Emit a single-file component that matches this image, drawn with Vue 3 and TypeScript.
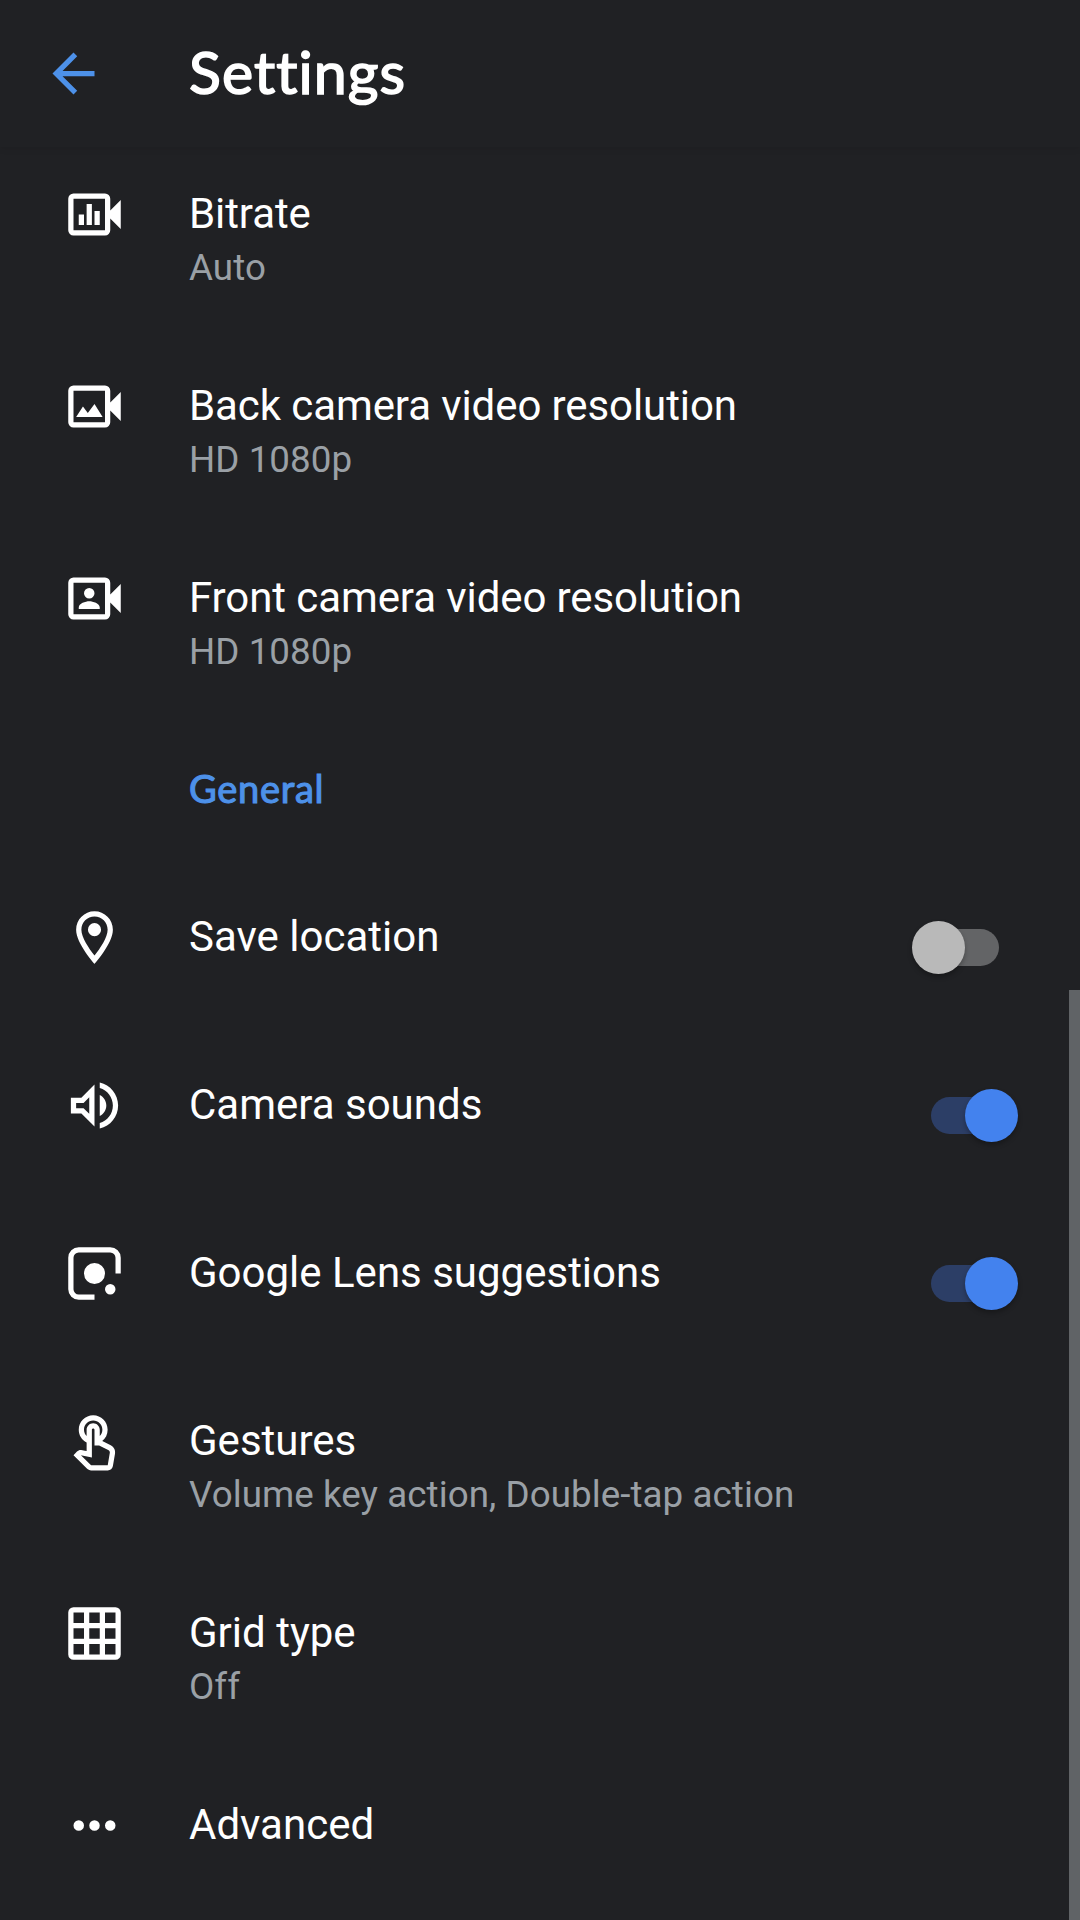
<script setup lang="ts">
import { ref } from 'vue'

interface Item {
  id: string
  title: string
  summary?: string
  toggle?: boolean
  path: string
}

const videoFrame =
  'M4 4h12a2 2 0 0 1 2 2v4.5l4-4v11l-4-4V18a2 2 0 0 1-2 2H4a2 2 0 0 1-2-2V6a2 2 0 0 1 2-2zM4 6v12h12V6z'

const videoItems: Item[] = [
  { id: 'bitrate', title: 'Bitrate', summary: 'Auto', path: videoFrame + 'M6 12h2v4H6zM9 8h2v8H9zM12 10.7h2V16h-2z' },
  { id: 'back', title: 'Back camera video resolution', summary: 'HD 1080p', path: videoFrame + 'M5 16l2.6-4 1.85 2.5L12 11l3.1 5z' },
  { id: 'front', title: 'Front camera video resolution', summary: 'HD 1080p', path: videoFrame + 'M10 8a2 2 0 1 1 0 4a2 2 0 1 1 0-4zM6 16v-.6c0-1.6 2.6-2.4 4-2.4s4 .8 4 2.4v.6z' },
]

const generalItems = ref<Item[]>([
  { id: 'location', title: 'Save location', toggle: false, path: 'M12 2C8.13 2 5 5.13 5 9c0 5.25 7 13 7 13s7-7.75 7-13c0-3.87-3.13-7-7-7zM7 9c0-2.76 2.24-5 5-5s5 2.24 5 5c0 2.88-2.88 7.19-5 9.88C9.92 16.21 7 11.85 7 9zM12 6.5a2.5 2.5 0 1 1 0 5a2.5 2.5 0 1 1 0-5z' },
  { id: 'sounds', title: 'Camera sounds', toggle: true, path: 'M3 9v6h4l5 5V4L7 9H3zm7-.17v6.34L7.83 13H5v-2h2.83L10 8.83zM16.5 12c0-1.77-1.02-3.29-2.5-4.03v8.05c1.48-.73 2.5-2.25 2.5-4.02zM14 3.23v2.06c2.89.86 5 3.54 5 6.71s-2.11 5.85-5 6.71v2.06c4.01-.91 7-4.49 7-8.77 0-4.28-2.99-7.86-7-8.77z' },
  { id: 'lens', title: 'Google Lens suggestions', toggle: true, path: 'M6 2h12a4 4 0 0 1 4 4v6h-2V6a2 2 0 0 0-2-2H6a2 2 0 0 0-2 2v12a2 2 0 0 0 2 2h6v2H6a4 4 0 0 1-4-4V6a4 4 0 0 1 4-4zM12 8a4 4 0 1 1 0 8a4 4 0 1 1 0-8zM18 16a2 2 0 1 1 0 4a2 2 0 1 1 0-4z' },
  { id: 'gestures', title: 'Gestures', summary: 'Volume key action, Double-tap action', path: 'M18.19 13.44l-3.24-1.62c1.29-1 2.05-2.56 2.05-4.32c0-3.04-2.46-5.5-5.5-5.5S6 4.46 6 7.5c0 2.13 1.22 3.98 3 4.89v3.26c-2.15-.46-2.02-.44-2.26-.44c-.53 0-1.03.21-1.41.59L4 17.22l5.09 5.09c.43.44 1.03.69 1.65.69h6.3c.98 0 1.81-.7 1.97-1.67l.8-4.71c.22-1.3-.43-2.58-1.62-3.18zM17.84 16.29L17.04 21h-6.3c-.09 0-.17-.04-.24-.1l-3.68-3.68l4.18.89V7.5c0-.28.22-.5.5-.5s.5.22.5.5v6h1.76l3.46 1.73c.47.2.69.63.62 1.06zM8 7.5C8 5.57 9.57 4 11.5 4S15 5.57 15 7.5c0 .95-.38 1.81-1 2.44V7.5C14 6.12 12.88 5 11.5 5S9 6.12 9 7.5v2.44C8.38 9.31 8 8.45 8 7.5z' },
  { id: 'grid', title: 'Grid type', summary: 'Off', path: 'M4 2h16a2 2 0 0 1 2 2v16a2 2 0 0 1-2 2H4a2 2 0 0 1-2-2V4a2 2 0 0 1 2-2zM4 4v4h4V4zM10 4v4h4V4zM16 4v4h4V4zM4 10v4h4v-4zM10 10v4h4v-4zM16 10v4h4v-4zM4 16v4h4v-4zM10 16v4h4v-4zM16 16v4h4v-4z' },
  { id: 'advanced', title: 'Advanced', path: 'M6 10a2 2 0 1 1 0 4a2 2 0 1 1 0-4zM12 10a2 2 0 1 1 0 4a2 2 0 1 1 0-4zM18 10a2 2 0 1 1 0 4a2 2 0 1 1 0-4z' },
])

function activate(item: Item) {
  if (item.toggle !== undefined) item.toggle = !item.toggle
}
</script>

<template>
  <div class="screen">
    <header class="bar">
      <svg class="back" viewBox="0 0 24 24"><path d="M20 11H7.83l5.59-5.59L12 4l-8 8 8 8 1.41-1.41L7.83 13H20z" /></svg>
      <h1 class="heading">Settings</h1>
    </header>
    <main class="list">
      <div v-for="item in videoItems" :key="item.id" class="row double">
        <svg class="icon" viewBox="0 0 24 24"><path fill-rule="evenodd" :d="item.path" /></svg>
        <div class="texts">
          <div class="title video-title">{{ item.title }}</div>
          <div class="summary">{{ item.summary }}</div>
        </div>
      </div>
      <h2 class="section">General</h2>
      <div
        v-for="item in generalItems"
        :key="item.id"
        class="row"
        :class="{ double: item.summary }"
        @click="activate(item)"
      >
        <svg class="icon" viewBox="0 0 24 24"><path fill-rule="evenodd" :d="item.path" /></svg>
        <div class="texts">
          <div class="title">{{ item.title }}</div>
          <div v-if="item.summary" class="summary">{{ item.summary }}</div>
        </div>
        <div v-if="item.toggle !== undefined" class="switch" :class="{ on: item.toggle }">
          <div class="thumb"></div>
        </div>
      </div>
    </main>
    <div class="scrollbar"></div>
  </div>
</template>

<style>
body {
  background: #202124;
}
</style>

<style scoped>
.screen {
  position: relative;
  width: 1080px;
  height: 1920px;
  overflow: hidden;
  background: #202124;
  color: #fff;
  font-family: Roboto, sans-serif;
}
.bar {
  display: flex;
  align-items: center;
  box-sizing: border-box;
  height: 147px;
  padding-left: 42px;
  box-shadow: 0 3px 6px rgba(0, 0, 0, 0.06);
}
.back {
  width: 63px;
  height: 63px;
  margin-right: 84px;
  fill: #4d91e9;
}
.heading {
  margin: 0 0 3px;
  font: 400 59px/70px Lato, sans-serif;
  letter-spacing: 1.1px;
  -webkit-text-stroke: 1.6px currentColor;
}
.row {
  display: flex;
  align-items: flex-start;
  box-sizing: border-box;
  height: 168px;
  padding: 36px 62px 0 63px;
}
.row.double {
  height: 192px;
}
.icon {
  flex: none;
  width: 63px;
  height: 63px;
  margin-right: 63px;
  fill: #fff;
}
.texts {
  flex: 1;
  white-space: nowrap;
}
.title {
  height: 60px;
  font-size: 42px;
  line-height: 62px;
}
.video-title {
  letter-spacing: -0.09px;
}
.summary {
  font-size: 36.75px;
  line-height: 50px;
  letter-spacing: 0.06px;
  color: #9aa0a6;
}
.section {
  box-sizing: border-box;
  height: 147px;
  margin: 0;
  padding: 40px 0 0 189px;
  font: 400 38px/50px Lato, sans-serif;
  letter-spacing: 0.7px;
  color: #4d91e9;
  -webkit-text-stroke: 1.1px currentColor;
}
.switch {
  box-sizing: border-box;
  width: 68px;
  height: 37px;
  margin: 23px 19px 0 0;
  border-radius: 19px;
  background: #636466;
}
.thumb {
  width: 53px;
  height: 53px;
  margin: -8px 0 0 -19px;
  border-radius: 50%;
  background: #b9b9b9;
  box-shadow: 0 3px 5px rgba(0, 0, 0, 0.28);
}
.switch.on {
  background: #2c3e66;
}
.on .thumb {
  margin-left: 34px;
  background: #4382ee;
}
.scrollbar {
  position: absolute;
  right: 0;
  top: 990px;
  width: 11px;
  height: 930px;
  background: #606366;
}
</style>
